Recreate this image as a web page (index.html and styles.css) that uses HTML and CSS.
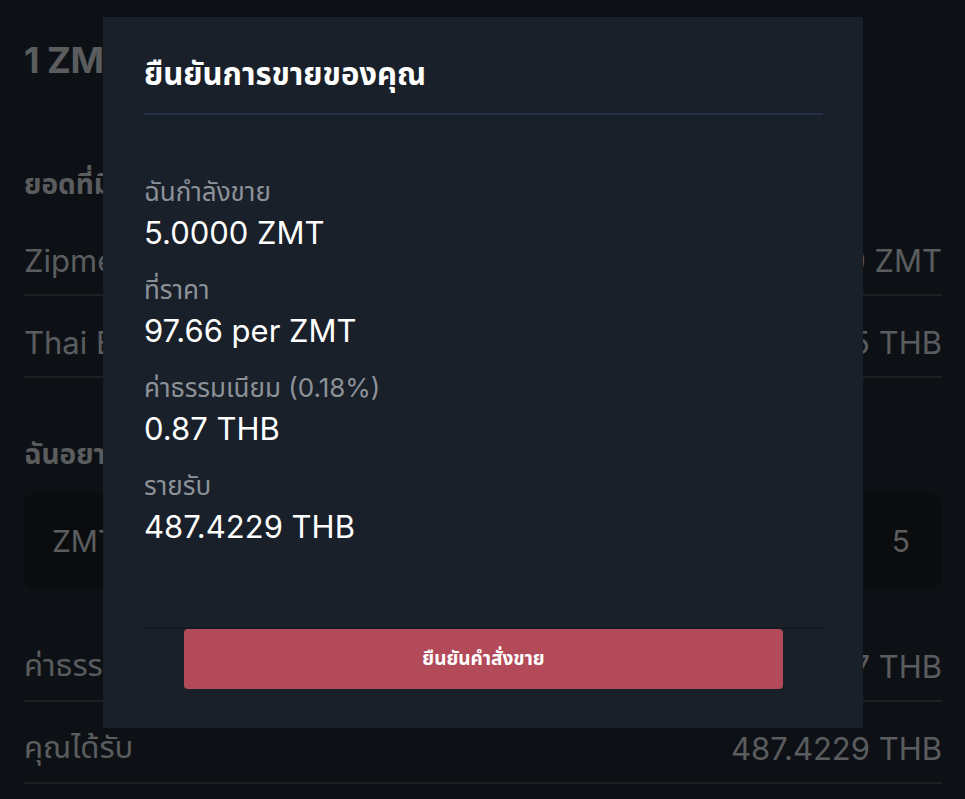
FILE: index.html
```html
<!DOCTYPE html>
<html>
<head>
    <meta charset="UTF-8">
    <title>ยืนยันการขาย</title>
    <link rel="stylesheet" href="styles.css">
</head>
<body>
<div class="page">
    <h1 class="rate">1 ZMT = 97.66 THB</h1>

    <h2 class="section">ยอดที่มีอยู่</h2>
    <div class="row">
        <span>Zipmex Token</span>
        <span>10.0000 ZMT</span>
    </div>
    <div class="row">
        <span>Thai Baht</span>
        <span>1,250.45 THB</span>
    </div>

    <h2 class="section sell">ฉันอยากขาย</h2>
    <div class="inputBox">
        <span>ZMT</span>
        <span>5</span>
    </div>

    <div class="row fee">
        <span>ค่าธรรมเนียม</span>
        <span>0.87 THB</span>
    </div>
    <div class="row">
        <span>คุณได้รับ</span>
        <span>487.4229 THB</span>
    </div>
</div>

<div class="mask"></div>

<div class="modal">
    <div class="modalHead">ยืนยันการขายของคุณ</div>
    <ul class="modalBody">
        <li>
            <p class="label">ฉันกำลังขาย</p>
            <p class="value">5.0000 ZMT</p>
        </li>
        <li>
            <p class="label">ที่ราคา</p>
            <p class="value">97.66 per ZMT</p>
        </li>
        <li>
            <p class="label">ค่าธรรมเนียม (0.18%)</p>
            <p class="value">0.87 THB</p>
        </li>
        <li>
            <p class="label">รายรับ</p>
            <p class="value">487.4229 THB</p>
        </li>
    </ul>
    <div class="modalFoot">
        <a href="javascript:;" class="confirmBtn">ยืนยันคำสั่งขาย</a>
    </div>
</div>
</body>
</html>
```

FILE: styles.css
```css
* {
    list-style: none;
    padding: 0;
    margin: 0;
    box-sizing: border-box;
}

body {
    background: #1b222c;
    font-family: Inter, "Noto Sans", "Noto Sans Thai", "Noto Sans CJK SC", sans-serif;
    color: #b4b8bd;
    height: 799px;
    overflow: hidden;
}

/* page under the dialog */
.page {
    padding: 0 23px 0 24px;
}

.rate {
    font-size: 36px;
    font-weight: 700;
    line-height: 44px;
    padding-top: 38px;
    letter-spacing: -0.5px;
}

.section {
    font-size: 28px;
    font-weight: 700;
    line-height: 40px;
    margin-top: 82px;
    margin-bottom: 10px;
}

.sell {
    margin-top: 56px;
    margin-bottom: 0;
}

.row {
    display: flex;
    justify-content: space-between;
    align-items: center;
    height: 82px;
    padding-top: 12px;
    border-bottom: 2px solid #3a3f47;
    font-size: 31px;
}

.inputBox {
    display: flex;
    justify-content: space-between;
    align-items: center;
    height: 95px;
    margin-top: 19px;
    padding: 0 32px 0 28px;
    border-radius: 10px;
    background: #14181d;
    font-size: 30px;
}

.fee {
    margin-top: 32px;
}

/* dim layer */
.mask {
    position: absolute;
    left: 0;
    top: 0;
    width: 100%;
    height: 100%;
    background: rgba(0, 0, 0, 0.5);
}

/* dialog */
.modal {
    position: absolute;
    left: 103px;
    top: 17px;
    width: 760px;
    height: 711px;
    background: #19202a;
    padding: 0 40px 0 41px;
    display: flex;
    flex-direction: column;
}

.modalHead {
    color: #fff;
    font-size: 31px;
    font-weight: 700;
    line-height: 40px;
    padding: 37px 0 19px;
    border-bottom: 2px solid #243142;
}

.modalBody {
    padding-top: 56px;
    flex: 1;
}

.modalBody li {
    margin-bottom: 15px;
}

.label {
    color: #8d9299;
    font-size: 26px;
    line-height: 41px;
}

.value {
    color: #fff;
    font-size: 31px;
    line-height: 42px;
}

.modalFoot {
    border-top: 2px solid #141920;
    padding: 0 40px 39px;
}

.confirmBtn {
    display: block;
    height: 60px;
    line-height: 60px;
    border-radius: 4px;
    background: #b34a59;
    color: #fff;
    text-align: center;
    text-decoration: none;
    font-size: 19px;
    font-weight: 700;
}
```
